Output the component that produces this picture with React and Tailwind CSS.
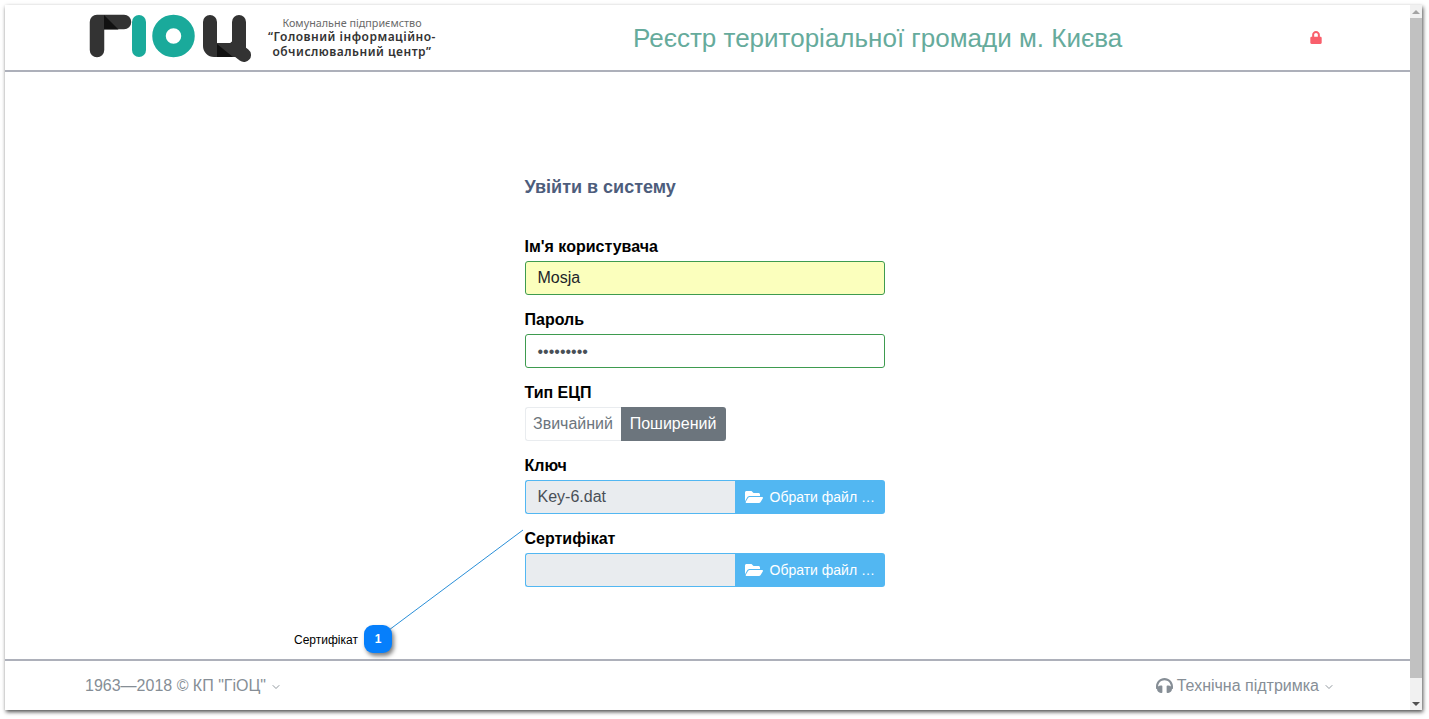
// App.jsx
import React from 'react';
import { FaLock, FaFolderOpen, FaHeadphones } from 'react-icons/fa';
import { ChevronDown } from 'lucide-react';

const Logo = () => (
  <svg width="162" height="50" viewBox="0 0 162 50" className="block">
    {/* Г */}
    <path d="M8 36V8h27" fill="none" stroke="#333333" strokeWidth="14.5" strokeLinecap="round" strokeLinejoin="round" />
    <path d="M15 1l14.5 14.5H15z" fill="#111111" />
    {/* І */}
    <path d="M50 8v28" fill="none" stroke="#1aaa9b" strokeWidth="14" strokeLinecap="round" />
    {/* О */}
    <circle cx="84.5" cy="22" r="14.5" fill="none" stroke="#1aaa9b" strokeWidth="13.5" />
    {/* Ц */}
    <path d="M121 8v24a4 4 0 0 0 4 4h24" fill="none" stroke="#333333" strokeWidth="14" strokeLinecap="round" />
    <path d="M150 8v28" fill="none" stroke="#333333" strokeWidth="14" strokeLinecap="round" />
    <path d="M146 34l9 7" fill="none" stroke="#333333" strokeWidth="14" strokeLinecap="round" />
    <path d="M128 30l16 13h-16z" fill="#111111" />
  </svg>
);

const Field = ({ label, children }) => (
  <div className="mb-[15px]">
    <label className="block h-[24px] text-[16px] leading-[20px] font-bold text-black">{label}</label>
    {children}
  </div>
);

const FilePicker = ({ value }) => (
  <div className="flex h-[34px] w-[360px]">
    <div className="flex-1 rounded-l-[3px] border border-r-0 border-[#52b7f2] bg-[#e9ecef] px-3 text-[16px] leading-[32px] text-[#495057]">
      {value}
    </div>
    <button className="flex w-[150px] items-center gap-[7px] rounded-r-[3px] bg-[#52b7f2] pl-[10px] text-[14px] text-white">
      <FaFolderOpen className="h-[18px] w-[18px]" />
      <span>Обрати файл …</span>
    </button>
  </div>
);

export default function App() {
  return (
    <div className="relative h-[719px] w-[1429px] overflow-hidden bg-white pt-[5px] pl-[5px] font-['Liberation_Sans',Arial,sans-serif]">
      <div className="flex h-[705px] w-[1417px] shadow-[1px_2px_4px_rgba(0,0,0,0.7)]">
        <div className="flex w-[1405px] flex-col bg-white">
          <header className="flex h-[67px] items-center border-b-2 border-[#adb0ba]">
            <div className="ml-[84px] flex items-center pt-[3px]">
              <Logo />
              <div className="mb-[3px] ml-[16px] flex w-[170px] flex-col items-center font-['Noto_Sans',sans-serif] leading-[14.5px]">
                <span className="text-[10.8px] text-[#6a6a6a]">Комунальне підприємство</span>
                <span className="text-[12px] font-semibold tracking-[0.5px] whitespace-nowrap text-[#333333]">“Головний інформаційно-</span>
                <span className="text-[12px] font-semibold tracking-[0.5px] whitespace-nowrap text-[#333333]">обчислювальний центр”</span>
              </div>
            </div>
            <h1 className="ml-[196px] text-[26px] leading-[32px] text-[#66ab9c]">Реєстр територіальної громади м. Києва</h1>
            <FaLock className="ml-[188px] h-[13px] w-[12px] text-[#f95f6c]" />
          </header>

          <main className="flex flex-1 justify-center">
            <form className="ml-[-6px] w-[360px] pt-[102px]">
              <h2 className="mb-[36px] h-[27px] text-[18px] leading-[27px] font-bold text-[#4d5d7c]">Увійти в систему</h2>
              <Field label="Ім'я користувача">
                <div className="h-[34px] rounded-[3px] border border-[#3e9b4f] bg-[#fbffbd] px-3 text-[16px] leading-[32px] text-[#212529]">Mosja</div>
              </Field>
              <Field label="Пароль">
                <div className="h-[34px] rounded-[3px] border border-[#3e9b4f] bg-white px-3 text-[16px] leading-[33px] text-[#495057]">•••••••••</div>
              </Field>
              <Field label="Тип ЕЦП">
                <div className="flex h-[34px] text-[16px]">
                  <div className="w-[96px] rounded-l-[3px] border border-r-0 border-[#e9ecef] text-center leading-[32px] text-[#6c757d]">Звичайний</div>
                  <div className="w-[105px] rounded-r-[3px] bg-[#6c757d] text-center leading-[34px] text-white">Поширений</div>
                </div>
              </Field>
              <Field label="Ключ">
                <FilePicker value="Key-6.dat" />
              </Field>
              <Field label="Сертифікат">
                <FilePicker value="" />
              </Field>
            </form>
          </main>

          <footer className="flex h-[51px] items-center justify-between border-t-2 border-[#adb0ba] pr-[75px] pl-[80px] text-[16px] text-[#868e96]">
            <span className="flex items-center gap-[4px]">
              1963—2018 © КП "ГіОЦ"
              <ChevronDown className="mt-[3px] h-[12px] w-[12px] text-[#6c757d]" strokeWidth={1.5} />
            </span>
            <span className="flex items-center gap-[4px]">
              <span className="flex items-center gap-[4px]">
                <FaHeadphones className="h-[17px] w-[17px]" />
                Технічна підтримка
              </span>
              <ChevronDown className="mt-[3px] h-[12px] w-[12px] text-[#6c757d]" strokeWidth={1.5} />
            </span>
          </footer>
        </div>

        <div className="flex w-[12px] flex-col bg-[#f1f1f1]">
          <div className="flex h-[13px] items-center justify-center">
            <div className="h-0 w-0 border-x-[4px] border-b-[4px] border-x-transparent border-b-[#a3a3a3]" />
          </div>
          <div className="h-[660px] bg-[#c1c1c1]" />
          <div className="flex flex-1 items-end justify-center pb-[4px]">
            <div className="h-0 w-0 border-x-[4px] border-t-[4px] border-x-transparent border-t-[#505050]" />
          </div>
        </div>
      </div>

      {/* callout over the page */}
      <svg className="absolute top-0 left-0" width="1429" height="719">
        <line x1="523" y1="530" x2="389" y2="630" stroke="#2a8fd8" strokeWidth="1" />
      </svg>
      <span className="absolute top-[632px] left-[294px] text-[12px] leading-[16px] text-black">Сертифікат</span>
      <div className="absolute top-[625px] left-[364px] flex h-[28px] w-[28px] items-center justify-center rounded-[9px] bg-[#067ffb] text-[12px] font-bold text-white shadow-[2px_3px_4px_rgba(0,0,0,0.5)]">1</div>
    </div>
  );
}
